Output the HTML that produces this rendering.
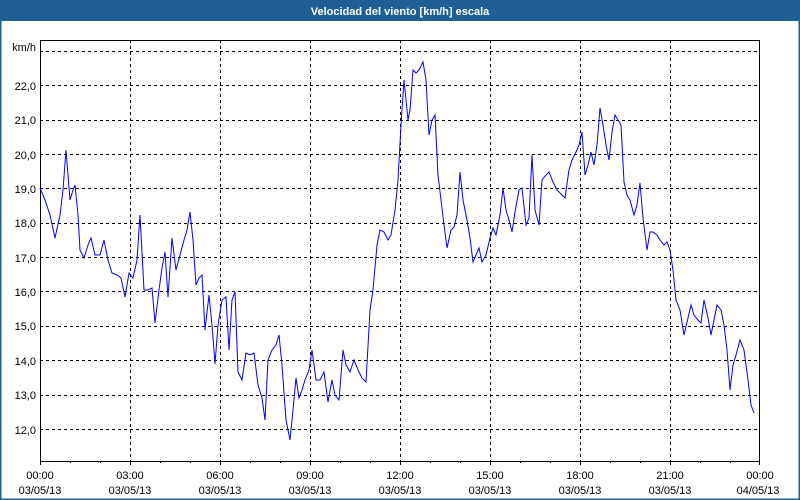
<!DOCTYPE html>
<html><head><meta charset="utf-8"><style>
html,body{margin:0;padding:0;width:800px;height:500px;overflow:hidden;background:#fff}
svg{display:block;font-family:"Liberation Sans",Tahoma,sans-serif}
</style></head><body>
<svg width="800" height="500" viewBox="0 0 800 500">
<rect x="0" y="0" width="800" height="500" fill="#fff"/>
<rect x="0" y="0" width="800" height="21" fill="#1e6096"/>
<rect x="0" y="0" width="1.5" height="500" fill="#1e6096"/>
<rect x="798.5" y="0" width="1.5" height="500" fill="#1e6096"/>
<rect x="0" y="498.5" width="800" height="1.5" fill="#1e6096"/>
<text x="400" y="15" fill="#fff" font-size="11" font-weight="bold" text-anchor="middle">Velocidad del viento [km/h] escala</text>
<g stroke="#000" stroke-width="1" stroke-dasharray="3,3" fill="none">
<path d="M40 51.5H760M40 85.5H760M40 120.5H760M40 154.5H760M40 188.5H760M40 223.5H760M40 257.5H760M40 291.5H760M40 326.5H760M40 360.5H760M40 395.5H760M40 429.5H760"/>
<path d="M130.5 40V461M220.5 40V461M310.5 40V461M400.5 40V461M490.5 40V461M580.5 40V461M670.5 40V461"/>
</g>
<g stroke="#000" stroke-width="1" fill="none">
<path d="M40.5 461V40.5H759.5V461.5H40"/>
<path d="M40.5 461v4M70.5 461v2M100.5 461v2M130.5 461v4M160.5 461v2M190.5 461v2M220.5 461v4M250.5 461v2M280.5 461v2M310.5 461v4M340.5 461v2M370.5 461v2M400.5 461v4M430.5 461v2M460.5 461v2M490.5 461v4M520.5 461v2M550.5 461v2M580.5 461v4M610.5 461v2M640.5 461v2M670.5 461v4M700.5 461v2M730.5 461v2M759.5 461v4"/>
</g>
<g font-size="11" fill="#000" text-anchor="end">
<text x="36" y="51">km/h</text>
<text x="36" y="90">22,0</text><text x="36" y="124">21,0</text><text x="36" y="159">20,0</text>
<text x="36" y="193">19,0</text><text x="36" y="227">18,0</text><text x="36" y="262">17,0</text>
<text x="36" y="296">16,0</text><text x="36" y="330">15,0</text><text x="36" y="365">14,0</text>
<text x="36" y="399">13,0</text><text x="36" y="434">12,0</text>
</g>
<g font-size="11" fill="#000" text-anchor="middle">
<text x="40" y="479">00:00</text><text x="40" y="494">03/05/13</text>
<text x="130" y="479">03:00</text><text x="130" y="494">03/05/13</text>
<text x="220" y="479">06:00</text><text x="220" y="494">03/05/13</text>
<text x="310" y="479">09:00</text><text x="310" y="494">03/05/13</text>
<text x="400" y="479">12:00</text><text x="400" y="494">03/05/13</text>
<text x="490" y="479">15:00</text><text x="490" y="494">03/05/13</text>
<text x="580" y="479">18:00</text><text x="580" y="494">03/05/13</text>
<text x="670" y="479">21:00</text><text x="670" y="494">03/05/13</text>
<text x="760" y="479">00:00</text><text x="758" y="494">04/05/13</text>
</g>
<polyline fill="none" stroke="#0000ff" stroke-width="1" points="40,188 45,200 50,215 55,238 60,215 63,190 66,150 70,200 73,190 75,185 78,215 80,250 84,258 88,245 91,238 95,255 100,255 104,240 108,260 112,273 117,275 121,278 125,297 129,273 133,278 137,260 140,215 144,290 148,290 152,288 155,323 159,290 162,268 165,252 168,297 172,238 176,270 180,255 184,240 187,230 190,212 193,240 196,285 199,278 202,275 205,330 209,295 212,325 215,364 218,325 222,300 226,297 229,350 232,300 235,292 238,372 242,380 246,353 250,355 254,353 258,385 262,398 265,420 268,360 272,350 276,345 279,335 282,365 286,420 290,440 293,410 296,378 299,398 302,390 305,380 309,370 312,350 316,380 320,380 324,372 328,402 332,380 335,395 339,400 343,350 346,365 350,372 354,360 358,370 362,378 366,382 370,310 373,290 377,245 380,230 384,232 388,240 391,235 395,210 398,180 401,125 404,80 408,120 410,110 413,70 416,73 419,70 423,62 426,80 429,135 432,120 435,115 438,175 441,200 444,225 447,248 451,230 454,227 457,215 460,172 463,200 467,220 470,238 473,262 476,255 479,248 482,262 486,255 490,238 493,228 496,235 500,215 503,188 506,210 509,220 512,232 515,212 519,190 522,188 526,225 529,218 532,155 535,210 539,225 542,180 546,175 549,172 553,182 557,190 562,195 565,198 569,170 572,160 576,152 579,145 582,132 585,175 588,165 591,152 594,165 597,145 600,108 603,125 606,145 609,160 612,132 615,115 618,120 621,125 624,182 627,195 630,200 634,215 637,205 640,183 643,218 647,250 650,232 653,232 657,235 660,240 664,245 667,242 670,250 673,270 676,300 680,310 684,335 688,318 691,305 694,315 698,320 701,323 704,300 708,318 711,335 714,320 717,305 721,310 724,325 727,350 730,390 733,365 736,355 740,340 744,350 748,380 751,405 754,413"/>
</svg>
</body></html>
